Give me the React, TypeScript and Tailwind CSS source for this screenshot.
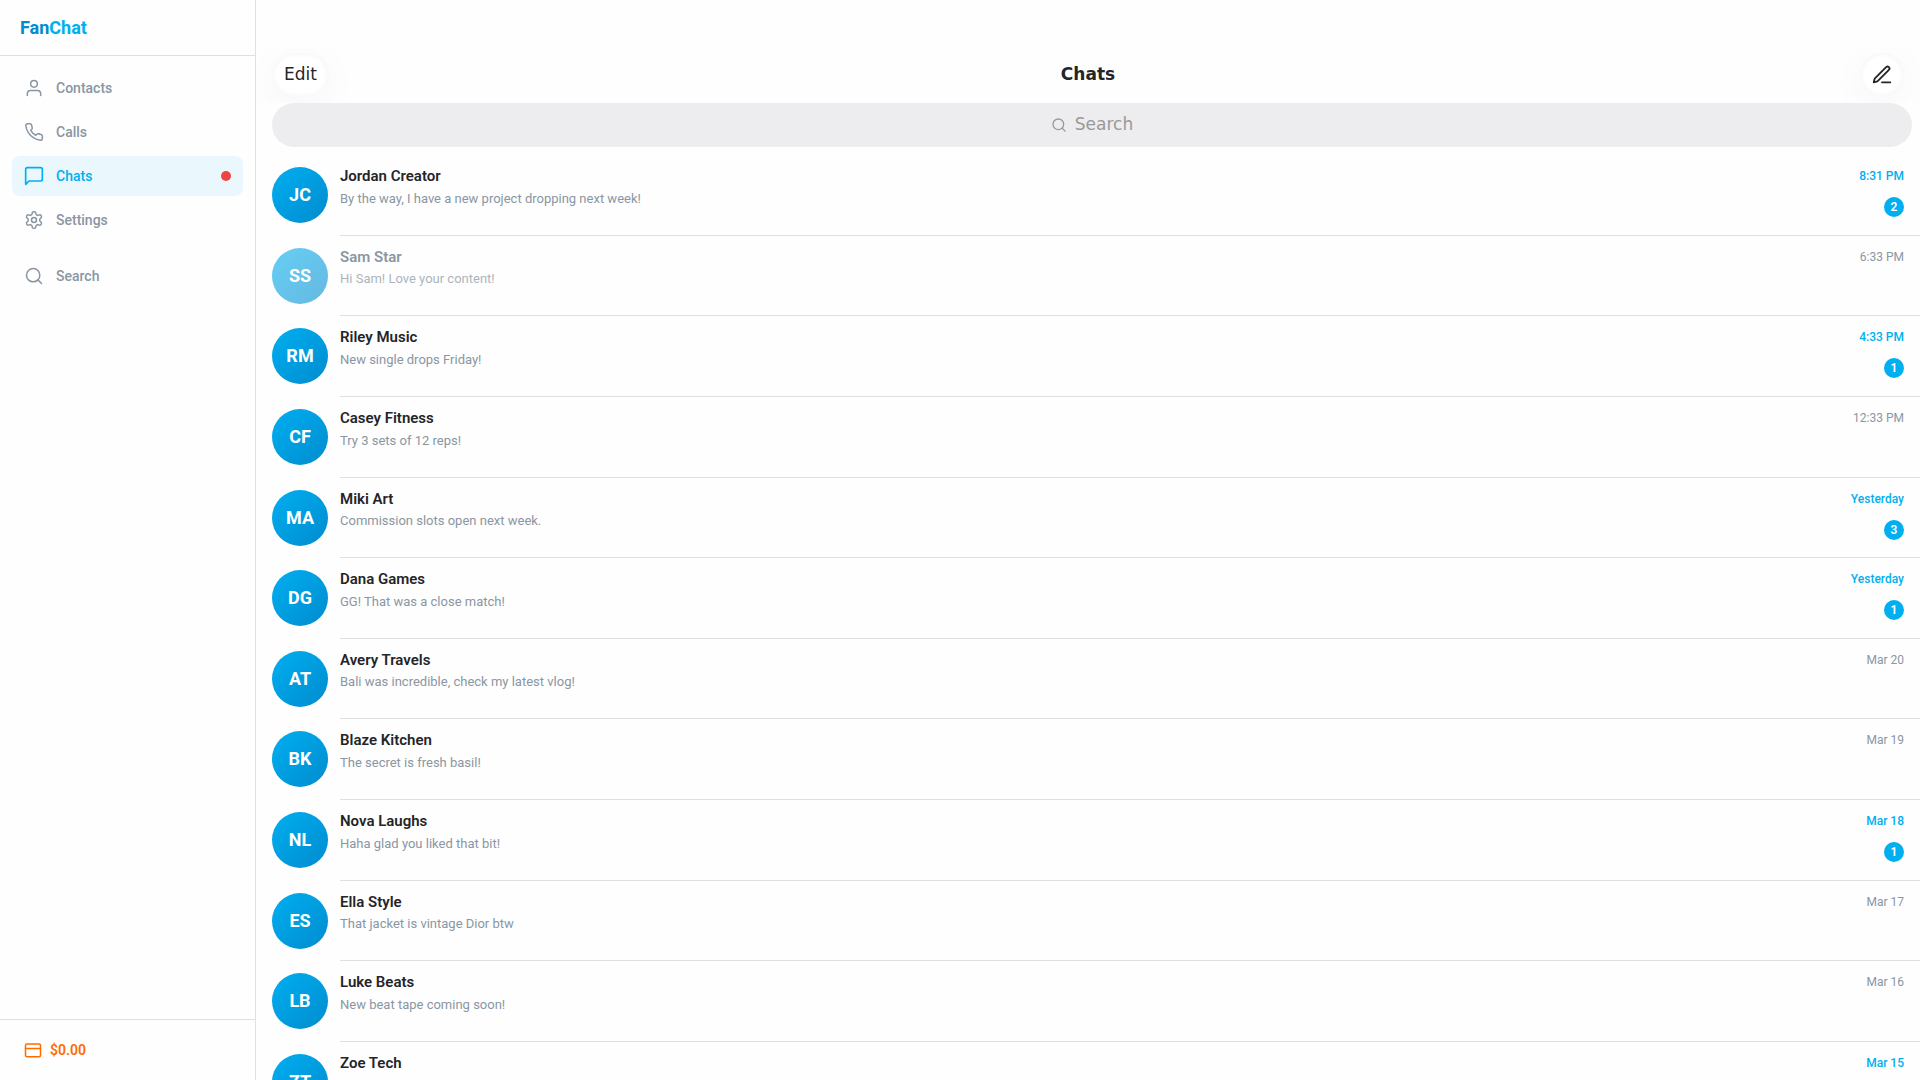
import { useState } from "react";
import type { ReactNode } from "react";

interface Chat {
    name: string;
    initials: string;
    preview: string;
    time: string;
    unread?: number;
    muted?: boolean;
}

interface NavItem {
    label: string;
    icon: ReactNode;
    alert?: boolean;
}

interface IconProps {
    children: ReactNode;
    className?: string;
    strokeWidth?: number;
}

const Icon = ({ children, className = "size-5", strokeWidth = 1.8 }: IconProps) => (
    <svg
        className={`shrink-0 ${className}`}
        fill="none"
        viewBox="0 0 24 24"
        stroke="currentColor"
        strokeWidth={strokeWidth}
        strokeLinecap="round"
        strokeLinejoin="round"
        aria-hidden="true"
    >
        {children}
    </svg>
);

const searchShape = (
    <>
        <circle cx="11" cy="11" r="8" />
        <path d="m21 21-4.35-4.35" />
    </>
);

const navItems: NavItem[] = [
    {
        label: "Contacts",
        icon: (
            <>
                <path d="M20 21v-2a4 4 0 0 0-4-4H8a4 4 0 0 0-4 4v2" />
                <circle cx="12" cy="7" r="4" />
            </>
        ),
    },
    {
        label: "Calls",
        icon: (
            <path d="M22 16.92v3a2 2 0 0 1-2.18 2 19.79 19.79 0 0 1-8.63-3.07 19.5 19.5 0 0 1-6-6 19.79 19.79 0 0 1-3.07-8.67A2 2 0 0 1 4.11 2h3a2 2 0 0 1 2 1.72 12.84 12.84 0 0 0 .7 2.81 2 2 0 0 1-.45 2.11L8.09 9.91a16 16 0 0 0 6 6l1.27-1.27a2 2 0 0 1 2.11-.45 12.84 12.84 0 0 0 2.81.7A2 2 0 0 1 22 16.92z" />
        ),
    },
    {
        label: "Chats",
        icon: <path d="M20 2H4a2 2 0 0 0-2 2v18l4-4h14a2 2 0 0 0 2-2V4a2 2 0 0 0-2-2z" />,
        alert: true,
    },
    {
        label: "Settings",
        icon: (
            <>
                <path d="M12.22 2h-.44a2 2 0 0 0-2 2v.18a2 2 0 0 1-1 1.73l-.43.25a2 2 0 0 1-2 0l-.15-.08a2 2 0 0 0-2.73.73l-.22.38a2 2 0 0 0 .73 2.73l.15.1a2 2 0 0 1 1 1.72v.51a2 2 0 0 1-1 1.74l-.15.09a2 2 0 0 0-.73 2.73l.22.38a2 2 0 0 0 2.73.73l.15-.08a2 2 0 0 1 2 0l.43.25a2 2 0 0 1 1 1.73V20a2 2 0 0 0 2 2h.44a2 2 0 0 0 2-2v-.18a2 2 0 0 1 1-1.73l.43-.25a2 2 0 0 1 2 0l.15.08a2 2 0 0 0 2.73-.73l.22-.39a2 2 0 0 0-.73-2.73l-.15-.08a2 2 0 0 1-1-1.74v-.5a2 2 0 0 1 1-1.74l.15-.09a2 2 0 0 0 .73-2.73l-.22-.38a2 2 0 0 0-2.73-.73l-.15.08a2 2 0 0 1-2 0l-.43-.25a2 2 0 0 1-1-1.73V4a2 2 0 0 0-2-2z" />
                <circle cx="12" cy="12" r="3" />
            </>
        ),
    },
];

const chats: Chat[] = [
    { name: "Jordan Creator", initials: "JC", preview: "By the way, I have a new project dropping next week!", time: "8:31 PM", unread: 2 },
    { name: "Sam Star", initials: "SS", preview: "Hi Sam! Love your content!", time: "6:33 PM", muted: true },
    { name: "Riley Music", initials: "RM", preview: "New single drops Friday!", time: "4:33 PM", unread: 1 },
    { name: "Casey Fitness", initials: "CF", preview: "Try 3 sets of 12 reps!", time: "12:33 PM" },
    { name: "Miki Art", initials: "MA", preview: "Commission slots open next week.", time: "Yesterday", unread: 3 },
    { name: "Dana Games", initials: "DG", preview: "GG! That was a close match!", time: "Yesterday", unread: 1 },
    { name: "Avery Travels", initials: "AT", preview: "Bali was incredible, check my latest vlog!", time: "Mar 20" },
    { name: "Blaze Kitchen", initials: "BK", preview: "The secret is fresh basil!", time: "Mar 19" },
    { name: "Nova Laughs", initials: "NL", preview: "Haha glad you liked that bit!", time: "Mar 18", unread: 1 },
    { name: "Ella Style", initials: "ES", preview: "That jacket is vintage Dior btw", time: "Mar 17" },
    { name: "Luke Beats", initials: "LB", preview: "New beat tape coming soon!", time: "Mar 16" },
    { name: "Zoe Tech", initials: "ZT", preview: "The M4 chip is a game changer", time: "Mar 15", unread: 2 },
];

const Sidebar = () => {
    const [active, setActive] = useState("Chats");

    return (
        <aside className="flex w-64 shrink-0 flex-col border-r border-[#e0e0e3]">
            <div className="border-b border-[#e0e0e3] px-5 py-[14px]">
                <a href="#" className="block text-lg leading-[27px] font-bold text-[#00aff0]">
                    <span className="text-[#008ccf]">Fan</span>Chat
                </a>
            </div>

            <nav className="flex flex-1 flex-col gap-1 px-3 py-3">
                {navItems.map(({ label, icon, alert }) => (
                    <a
                        key={label}
                        href="#"
                        onClick={() => setActive(label)}
                        className={`flex h-10 items-center gap-3 rounded-lg px-3 text-sm font-medium ${active === label ? "bg-[#eaf8fe] text-[#00aff0]" : "text-[#8a96a3]"
                            }`}
                    >
                        <Icon strokeWidth={active === label ? 2 : 1.8}>{icon}</Icon>
                        {label}
                        {alert && <span className="ml-auto size-[10px] rounded-full bg-[#ef4444]" />}
                    </a>
                ))}
                <a href="#" className="mt-3 flex h-10 items-center gap-3 rounded-lg px-3 text-sm font-medium text-[#8a96a3]">
                    <Icon>{searchShape}</Icon>
                    Search
                </a>
            </nav>

            <div className="border-t border-[#e0e0e3] p-3">
                <a href="#" className="flex h-9 items-center gap-2 px-3 text-sm font-semibold text-[#ff6b00]">
                    <Icon className="size-[18px]" strokeWidth={2}>
                        <rect x="2" y="4" width="20" height="17" rx="2" />
                        <path d="M2 10h20" />
                    </Icon>
                    $0.00
                </a>
            </div>
        </aside>
    );
};

const ChatRow = ({ chat }: { chat: Chat }) => {
    const isNew = Boolean(chat.unread);

    return (
        <li>
            <a href="#" className="flex gap-3 pl-4">
                <div
                    className={`mt-3 flex size-14 shrink-0 items-center justify-center rounded-full bg-linear-135 from-[#00aff0] to-[#008ccf] text-lg font-bold text-white ${chat.muted ? "opacity-60" : ""
                        }`}
                >
                    {chat.initials}
                </div>
                <div className="flex min-w-0 flex-1 justify-between border-b border-[#e0e0e3] pt-[11px] pr-4 pb-[9px]">
                    <div className="min-w-0">
                        <h2 className={`truncate text-[15px] leading-snug font-semibold ${chat.muted ? "text-[#8a96a3]" : "text-[#242529]"}`}>
                            {chat.name}
                        </h2>
                        <p className={`mt-[2px] min-h-[37px] text-[13px] leading-[19px] text-[#8a96a3] ${chat.muted ? "opacity-70" : ""}`}>
                            {chat.preview}
                        </p>
                    </div>
                    <div className="flex shrink-0 flex-col items-end gap-[11px]">
                        <time className={`text-xs leading-5 ${isNew ? "font-medium text-[#00aff0]" : "text-[#8a96a3]"}`}>
                            {chat.time}
                        </time>
                        {isNew && (
                            <span className="flex h-5 min-w-5 items-center justify-center rounded-full bg-[#00aff0] px-1 text-xs font-semibold text-white">
                                {chat.unread}
                            </span>
                        )}
                    </div>
                </div>
            </a>
        </li>
    );
};

const App = () => {
    return (
        <div className="flex h-screen overflow-hidden bg-[#fefefe] font-['Roboto',sans-serif]">
            <Sidebar />
            <main className="flex min-w-0 flex-1 flex-col pt-[47px]">
                <header className="flex items-center justify-between overflow-hidden px-4 py-[6px] font-['DejaVu_Sans',sans-serif] text-[17px] text-[#242529]">
                    <div className="flex flex-1">
                        <button className="h-11 rounded-full bg-white px-3 shadow-[0_8px_40px_rgba(0,0,0,0.04),inset_0_0_6px_rgba(0,0,0,0.06)]">
                            Edit
                        </button>
                    </div>
                    <h1 className="font-bold">Chats</h1>
                    <div className="flex flex-1 justify-end">
                        <button
                            aria-label="New chat"
                            className="flex size-11 items-center justify-center rounded-full bg-white shadow-[0_8px_40px_rgba(0,0,0,0.04),inset_0_0_6px_rgba(0,0,0,0.06)]"
                        >
                            <Icon className="size-[22px]" strokeWidth={2}>
                                <path d="M12 20h9" />
                                <path d="M16.5 3.5a2.12 2.12 0 0 1 3 3L7 19l-4 1 1-4Z" />
                            </Icon>
                        </button>
                    </div>
                </header>

                <div className="pr-2 pl-4 font-['DejaVu_Sans',sans-serif]">
                    <label className="flex h-11 items-center justify-center gap-2 rounded-full bg-[#ededf0] text-[#999999]">
                        <Icon className="size-4" strokeWidth={2}>
                            {searchShape}
                        </Icon>
                        <input
                            type="search"
                            aria-label="Search chats"
                            placeholder="Search"
                            className="field-sizing-content text-[17px] outline-none placeholder:text-[#999999]"
                        />
                    </label>
                </div>

                <ul className="min-h-0 flex-1 overflow-y-auto pt-2 [scrollbar-width:none]">
                    {chats.map((chat) => (
                        <ChatRow key={chat.name} chat={chat} />
                    ))}
                </ul>
            </main>
        </div>
    );
};

export default App;
